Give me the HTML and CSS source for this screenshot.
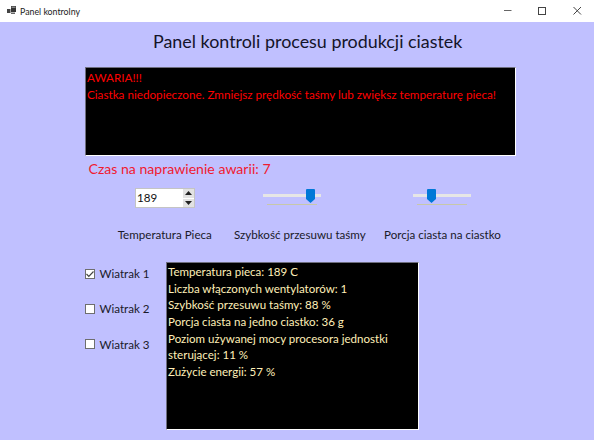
FILE: index.html
```html
<!DOCTYPE html>
<html lang="pl">
<head>
<meta charset="utf-8">
<title>Panel kontrolny</title>
<link rel="stylesheet" href="styles.css">
</head>
<body>
<div class="window">
  <header class="titlebar">
    <svg class="app-icon" width="16" height="16" viewBox="0 0 16 16"><rect x="6" y="3" width="5" height="6" fill="#333"/><rect x="6.500" y="3.500" width="4" height="1.500" fill="#888"/><rect x="2" y="6" width="3.500" height="4" fill="#444"/><rect x="6" y="9.500" width="4" height="1.500" fill="#666"/></svg>
    <span class="app-title">Panel kontrolny</span>
    <div class="win-buttons">
      <svg width="35" height="22" viewBox="0 0 35 22"><path d="M15 10.500h7.500" stroke="#666" fill="none"/></svg>
      <svg width="35" height="22" viewBox="0 0 35 22"><rect x="14.500" y="7.500" width="7" height="7" stroke="#444" fill="none"/></svg>
      <svg width="35" height="22" viewBox="0 0 35 22"><path d="M14.500 7l7.500 7.500M22 7l-7.500 7.500" stroke="#444" fill="none"/></svg>
    </div>
  </header>
  <main class="content">
    <h1 class="heading">Panel kontroli procesu produkcji ciastek</h1>
    <div class="alert">AWARIA!!!<br>Ciastka niedopieczone. Zmniejsz prędkość taśmy lub zwiększ temperaturę pieca!</div>
    <p class="countdown">Czas na naprawienie awarii: 7</p>
    <div class="controls">
      <div class="numeric">
        <span class="numeric-value">189</span>
        <div class="spin">
          <span class="spin-btn"><svg width="7" height="4" viewBox="0 0 7 4"><path d="M3.500 0L7 4H0z" fill="#222"/></svg></span>
          <span class="spin-btn"><svg width="7" height="4" viewBox="0 0 7 4"><path d="M0 0h7L3.500 4z" fill="#222"/></svg></span>
        </div>
      </div>
      <div class="slider slider-speed">
        <div class="track"></div>
        <svg class="thumb" width="9" height="14" viewBox="0 0 9 14"><path d="M0 1a1 1 0 0 1 1-1h7a1 1 0 0 1 1 1v9l-4.500 4L0 10z" fill="#0078d7"/></svg>
        <div class="ticks"></div>
      </div>
      <div class="slider slider-portion">
        <div class="track"></div>
        <svg class="thumb" width="9" height="14" viewBox="0 0 9 14"><path d="M0 1a1 1 0 0 1 1-1h7a1 1 0 0 1 1 1v9l-4.500 4L0 10z" fill="#0078d7"/></svg>
        <div class="ticks"></div>
      </div>
    </div>
    <div class="labels">
      <span class="label-temp">Temperatura Pieca</span>
      <span class="label-speed">Szybkość przesuwu taśmy</span>
      <span class="label-portion">Porcja ciasta na ciastko</span>
    </div>
    <div class="bottom">
      <div class="fans">
        <div class="fan">
          <span class="check"><svg width="10" height="10" viewBox="0 0 10 10"><path d="M1.500 5l2.300 2.300L8.500 2.500" stroke="#444" stroke-width="1.200" fill="none"/></svg></span>
          <span>Wiatrak 1</span>
        </div>
        <div class="fan"><span class="check"></span><span>Wiatrak 2</span></div>
        <div class="fan"><span class="check"></span><span>Wiatrak 3</span></div>
      </div>
      <div class="info">
        <div>Temperatura pieca: 189 C</div>
        <div>Liczba włączonych wentylatorów: 1</div>
        <div>Szybkość przesuwu taśmy: 88 %</div>
        <div>Porcja ciasta na jedno ciastko: 36 g</div>
        <div>Poziom używanej mocy procesora jednostki sterującej: 11 %</div>
        <div>Zużycie energii: 57 %</div>
      </div>
    </div>
  </main>
</div>
</body>
</html>
```

FILE: styles.css
```css
* { box-sizing: border-box; }
html, body { margin: 0; padding: 0; }
body {
  width: 594px;
  height: 440px;
  overflow: hidden;
  font-family: Lato, "Noto Sans", sans-serif;
  font-size: 11.600px;
  color: #1a1a2a;
}
.window { display: flex; flex-direction: column; height: 440px; }
.titlebar {
  display: flex;
  align-items: center;
  height: 22px;
  flex: none;
  background: #fff;
  padding-left: 5px;
}
.app-icon { flex: none; }
.app-title { margin-left: -1px; font-size: 8.800px; color: #222; }
.win-buttons { display: flex; margin-left: auto; }
.content { flex: 1; background: #c0c0ff; padding-left: 85px; }
.heading {
  margin: 7px 0 0 68px;
  height: 38px;
  font-size: 17.900px;
  font-weight: 400;
  line-height: 25px;
  white-space: nowrap;
  color: #14142a;
}
.alert {
  width: 431px;
  height: 89px;
  background: #000;
  border: 1px solid;
  border-color: #6e6e7e #fff #fff #6e6e7e;
  padding: 1px;
  color: #f00;
  font-size: 11.700px;
  line-height: 17.300px;
  white-space: nowrap;
}
.countdown {
  margin: 3px 0 0 3.500px;
  height: 29px;
  font-size: 14.100px;
  line-height: 20px;
  color: #f01a30;
}
.controls { display: flex; align-items: flex-start; height: 39px; margin-left: 50px; }
.numeric {
  display: flex;
  width: 60px;
  height: 20px;
  background: #fff;
  border: 1px solid #c4c4c4;
}
.numeric-value { flex: 1; line-height: 18px; padding-left: 1px; color: #111; }
.spin { display: flex; flex-direction: column; width: 11px; margin-right: 0; gap: 1px; }
.spin-btn {
  display: flex;
  flex: 1;
  align-items: center;
  justify-content: center;
  background: #e2e2e2;
}
.slider { position: relative; width: 58px; height: 20px; padding-top: 6px; flex: none; }
.slider-speed { margin-left: 68px; }
.slider-portion { margin-left: 92px; }
.track { height: 3px; background: #e6e6e6; }
.ticks { height: 1px; margin: 7px 4px 0; background: #c8c8a8; }
.thumb { position: absolute; top: 1px; }
.slider-speed .thumb { left: 43px; }
.slider-portion .thumb { left: 14px; }
.labels { display: flex; height: 35px; line-height: 16px; white-space: nowrap; }
.label-temp { margin-left: 32.700px; width: 116.300px; }
.label-speed { width: 150px; }
.bottom { display: flex; }
.fans { width: 81px; flex: none; padding-top: 3px; }
.fan { display: flex; align-items: center; height: 17px; margin-bottom: 18.300px; white-space: nowrap; }
.check {
  display: block;
  width: 10px;
  height: 10px;
  margin-right: 4.500px;
  background: #fff;
  border: 1px solid #6e6e6e;
}
.check svg { display: block; margin: -1px; }
.info {
  width: 253px;
  height: 168px;
  background: #000;
  border: 1px solid;
  border-color: #6e6e7e #fff #fff #6e6e7e;
  padding: 1px;
  color: #ffefb8;
  font-size: 11.550px;
  line-height: 16.670px;
}
```
